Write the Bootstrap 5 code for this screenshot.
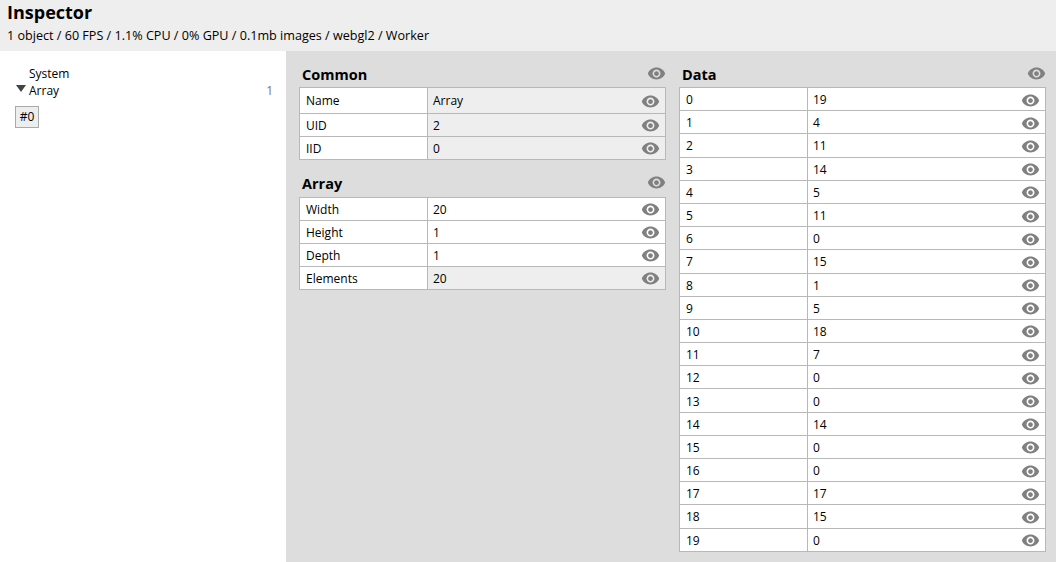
<!DOCTYPE html>
<html lang="en"><head><meta charset="utf-8">
<title>Inspector</title>
<link href="https://cdn.jsdelivr.net/npm/bootstrap@5.3.0/dist/css/bootstrap.min.css" rel="stylesheet">
<style>
html,body{height:100%;overflow:hidden}
body{font-family:"Open Sans","Noto Sans",sans-serif;font-size:12px;color:#000;background:#ddd;letter-spacing:0}
.top-bar{height:51px;background:#eee;padding:1px 7px 0}
.top-bar h1{font-size:18px;font-weight:700;line-height:22px;margin:0}
.top-bar p{line-height:18px;margin:0;margin-top:4px;font-size:12.6px}
.main-area{height:511px}
.side-tree{width:286px;background:#fff;padding:14px 13px 0 15px}
.tree-row{height:17px;line-height:17px;padding-left:14px;position:relative}
.tree-caret{position:absolute;left:1px;top:3px;width:0;height:0;border-left:5px solid transparent;border-right:5px solid transparent;border-top:7px solid #444}
.tree-count{color:#777}
.inst-btn{width:24px;height:22px;margin-top:7px;background:#eee;border:1px solid #aaa;line-height:20px;text-align:center;font-size:12px;color:#000;padding:0;border-radius:0;display:block}
.panes{padding:0 9px 0 13px;gap:13px}
.pane-col{width:367px}
.sec-head{height:24px;padding:0 0 0 3px;margin-top:12px;line-height:24px}
.sec-two{margin-top:11px;height:26px}
.sec-head .eye{margin-top:-3px}
.sec-two .eye{margin-top:-4px}
.sec-two h2{margin-top:-1px}
.sec-head h2{font-size:14.5px;font-weight:700;margin:0;line-height:24px}
.prop-tbl{width:100%;table-layout:fixed;border-collapse:collapse;background:#fff}
.prop-tbl td{border:1px solid #b8b8b8;padding:1px 5px 0 6px;height:23px;line-height:20px;vertical-align:middle}
.prop-tbl td:first-child{width:128px}
.prop-tbl td+td{padding-left:5px}
.prop-tbl tr.tall td{height:26px}
.prop-tbl .ro{background:#eee}
.data-tbl td{height:23.2px;padding-top:2px}
.eye{width:19px;height:19px;fill:#808080;display:block;flex:none}
</style></head>
<body>
<div class="top-bar">
  <h1>Inspector</h1>
  <p>1 object / 60 FPS / 1.1% CPU / 0% GPU / 0.1mb images / webgl2 / Worker</p>
</div>
<div class="main-area d-flex">
  <div class="side-tree">
    <div class="tree-row">System</div>
    <div class="tree-row d-flex justify-content-between"><span class="tree-caret"></span><span>Array</span><span class="tree-count">1</span></div>
    <button class="inst-btn" type="button">#0</button>
  </div>
  <div class="panes d-flex flex-grow-1">
    <div class="pane-col" id="left"></div>
    <div class="pane-col" id="right"></div>
  </div>
</div>
<svg class="d-none"><symbol id="eye-i" viewBox="0 0 24 24"><path d="M12 4.5C7 4.5 2.73 7.61 1 12c1.73 4.39 6 7.5 11 7.5s9.27-3.11 11-7.5c-1.73-4.39-6-7.5-11-7.5zM12 17c-2.76 0-5-2.24-5-5s2.24-5 5-5 5 2.24 5 5-2.24 5-5 5zm0-8c-1.66 0-3 1.34-3 3s1.34 3 3 3 3-1.34 3-3-1.34-3-3-3z"/></symbol></svg>
<script>
const eye='<svg class="eye"><use href="#eye-i"/></svg>';
function sec(title,rows,cls,extra){
  let h='<div class="sec-head d-flex justify-content-between align-items-center '+(extra||'')+'"><h2>'+title+'</h2>'+eye+'</div><table class="prop-tbl '+(cls||'')+'"><tbody>';
  rows.forEach(r=>{h+='<tr class="'+(r[3]?'tall':'')+'"><td>'+r[0]+'</td><td class="'+(r[2]?'ro':'')+'"><div class="d-flex justify-content-between align-items-center"><span>'+r[1]+'</span>'+eye+'</div></td></tr>';});
  return h+'</tbody></table>';
}
document.getElementById('left').innerHTML=
 sec('Common',[['Name','Array',1,1],['UID','2',1],['IID','0',1]])+
 sec('Array',[['Width','20'],['Height','1'],['Depth','1'],['Elements','20',1]],'','sec-two');
const d=[19,4,11,14,5,11,0,15,1,5,18,7,0,0,14,0,0,17,15,0];
document.getElementById('right').innerHTML=sec('Data',d.map((v,i)=>[i,v]),'data-tbl');
</script>
<script src="https://cdn.jsdelivr.net/npm/bootstrap@5.3.0/dist/js/bootstrap.bundle.min.js"></script>
</body></html>
